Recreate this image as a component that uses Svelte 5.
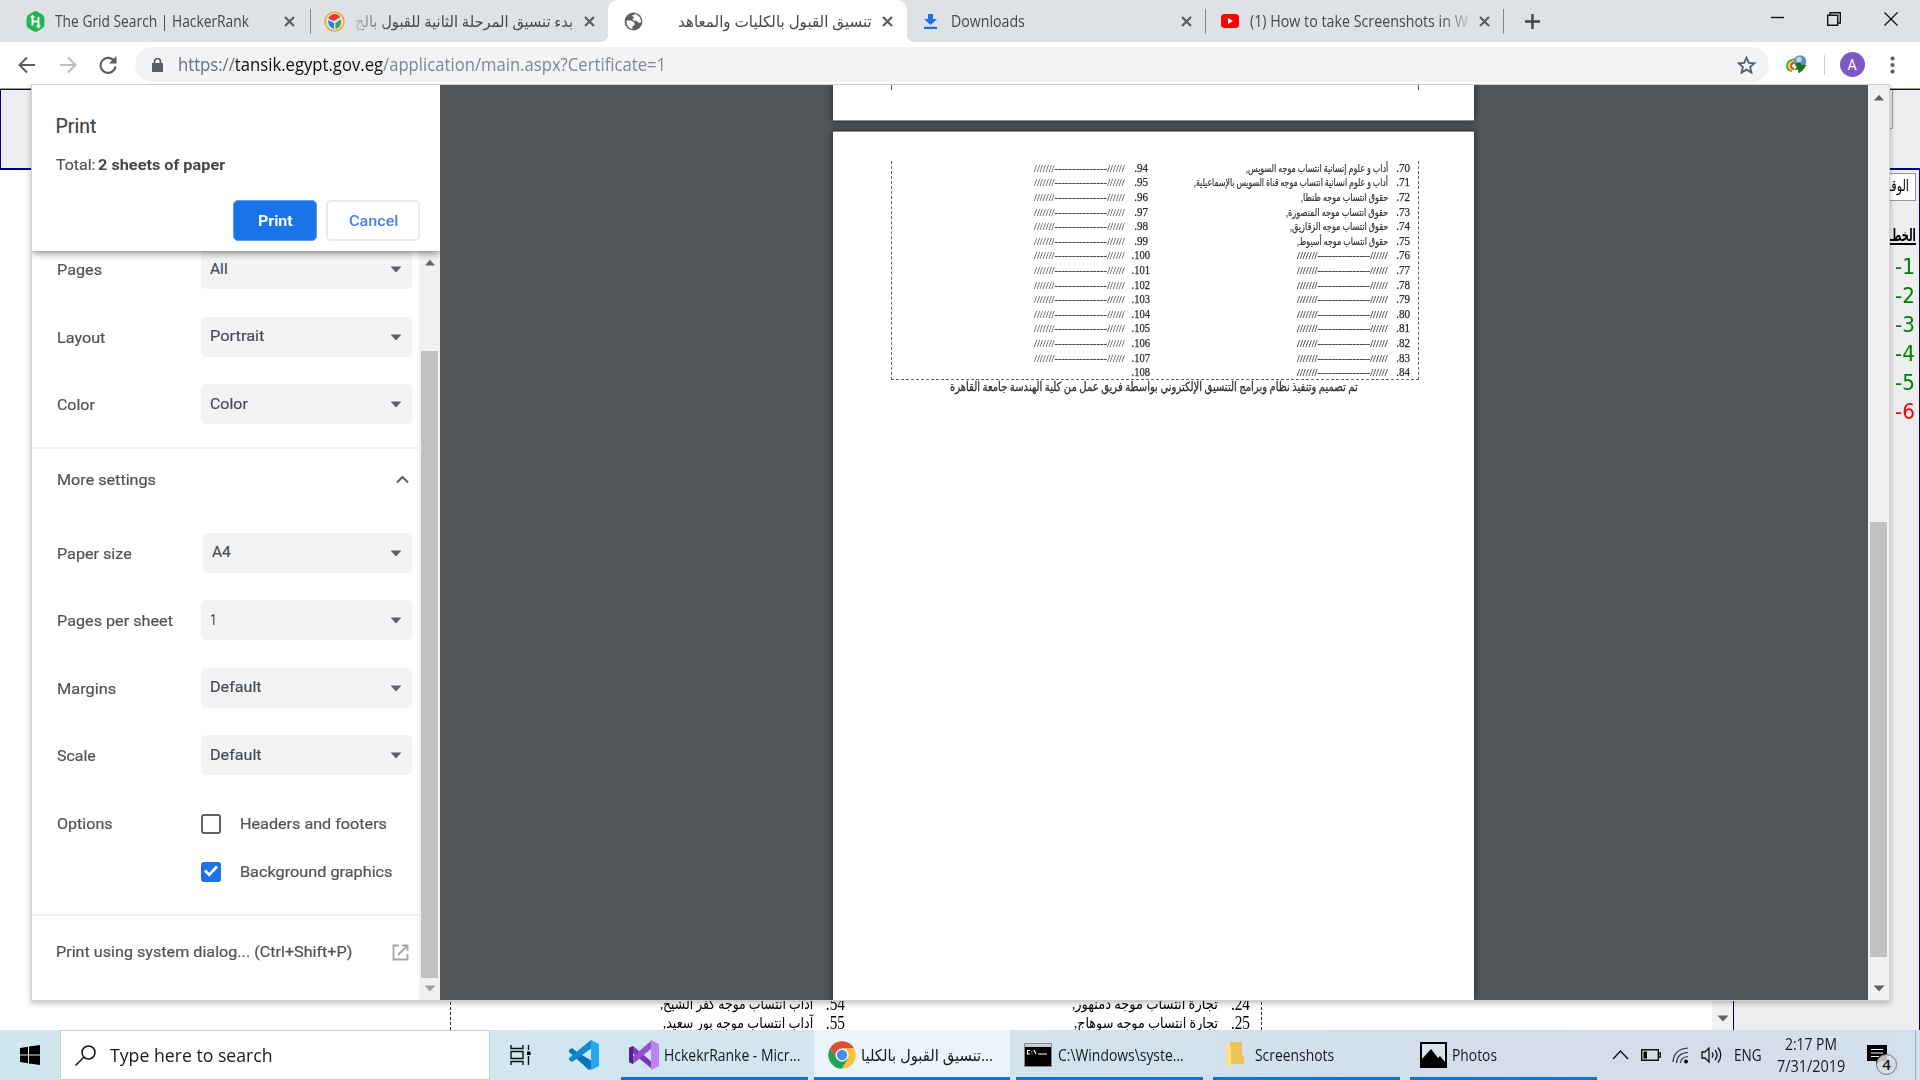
<script>
  // Scales a run of text horizontally so that it fills the given width.
  function squeeze(node, w) {
    const natural = node.offsetWidth;
    if (natural) node.style.transform = `scaleX(${w / natural})`;
  }

  const blank = '///////---------------//////';
  const first = [
    [70, 'أداب و علوم إنسانية انتساب موجه السويس,', 142],
    [71, 'أداب و علوم انسانية انتساب موجه قناة السويس بالإسماعيلية,', 194],
    [72, 'حقوق انتساب موجه طنطا,', 87],
    [73, 'حقوق انتساب موجه المنصورة,', 102],
    [74, 'حقوق انتساب موجه الزقازيق,', 98],
    [75, 'حقوق انتساب موجه أسيوط,', 91],
    ...Array.from({ length: 9 }, (_, i) => [76 + i, blank, 91])
  ];
  const second = Array.from({ length: 15 }, (_, i) => [94 + i, i < 14 ? blank : '', 91]);

  const basic = [
    ['Pages', 'All', 45, 18],
    ['Layout', 'Portrait', 48, 54],
    ['Color', 'Color', 38, 38]
  ];
  const more = [
    ['Paper size', 'A4', 75, 19],
    ['Pages per sheet', '1', 116, 7],
    ['Margins', 'Default', 59, 52],
    ['Scale', 'Default', 39, 52]
  ];
  const apps = [
    { icon: 'vs', text: 'HckekrRanke - Micr...', w: 136 },
    { icon: 'chrome', text: 'تنسيق القبول بالكليا...', w: 132 },
    { icon: 'cmd', text: 'C:\\Windows\\syste...', w: 126 },
    { icon: 'folder', text: 'Screenshots', w: 79 },
    { icon: 'photos', text: 'Photos', w: 45 }
  ];
</script>

{#snippet fit(text, w, rtl = false)}
  <span class="fit" style:width={w + 'px'}><span class="run" dir={rtl ? 'rtl' : 'ltr'} use:squeeze={w}>{text}</span></span>
{/snippet}

{#snippet cross()}
  <svg width="11" height="11" viewBox="0 0 11 11"><path d="M1 1l9 9M10 1l-9 9" stroke="#5a5e63" stroke-width="2.2" /></svg>
{/snippet}

{#snippet caret(cls, dir)}
  <svg class={cls} width="12" height="7" viewBox="0 0 12 7"><path d={dir === 'up' ? 'M1 6.5L6 .8l5 5.7z' : 'M.5.5h11L6 6.5z'} fill="currentColor" /></svg>
{/snippet}

{#snippet row(label, value, lw, vw)}
  <div class="row">
    <div class="label">{@render fit(label, lw)}</div>
    <div class="select" class:inset={label === 'Paper size'}>{@render fit(value, vw)}{@render caret('tri', 'down')}</div>
  </div>
{/snippet}

{#snippet list(items)}
  {#each items as [n, text, w]}
    <li><span class="num" class:wide={n > 99}>.{n}</span><span class="txt">{#if text}{@render fit(text, w, n < 76)}{/if}</span></li>
  {/each}
{/snippet}

<div class="screen">
  <header class="tabs">
    <div class="tab t1">
      <svg width="19" height="21" viewBox="0 0 19 21"><path d="M9.500 0q1.400 0 2.600.9l4.800 3q1.600 1 1.600 6.600t-1.600 6.600l-4.800 3q-2.600 1.600-5.200 0l-4.800-3Q.5 16 .5 10.500t1.600-6.600l4.800-3Q8.100 0 9.500 0z" fill="#22b455" /><path d="M6.500 5.500v9M12.500 6v9.500M6.500 10.500h6M4.800 6.500l1.700-1.500 1.700 1.500M10.800 14.500l1.700 1.500 1.700-1.500" stroke="#fff" stroke-width="1.900" fill="none" /></svg>
      <div class="title">{@render fit('The Grid Search | HackerRank', 194)}</div>
      {@render cross()}
    </div>
    <i class="sep"></i>
    <div class="tab t2">
      <svg width="21" height="21" viewBox="0 0 21 21"><circle cx="10.500" cy="10.500" r="9.500" fill="#dee1e6" stroke="#f6ac28" stroke-width="1.700" /><path d="M4.500 7.500Q6 3 11 3q4 0 5 3.500l-6.500 3.500z" fill="#e33a35" /><path d="M4 9l6 3v6Q4 16 4 9z" fill="#2585d5" /><path d="M17 8.500q1 8-5.500 9.500v-6z" fill="#35a35b" /></svg>
      <div class="title fade-l">{@render fit('بدء تنسيق المرحلة الثانية للقبول بالج', 218, true)}</div>
      {@render cross()}
    </div>
    <div class="tab t3">
      <svg width="19" height="19" viewBox="0 0 19 19"><circle cx="9.500" cy="9.500" r="8.900" fill="#5c6065" /><path d="M2.500 8.500l4.500 0 3.500 2v2.500l-2 1.500v2.700Q2 15.500 2.500 8.500zM8 3.500l4-1.500 4 3.500 1.300 4.500-2.300 1-2.500-2-3.500-.5-.5-2 2-.5z" fill="#fff" /></svg>
      <div class="title">{@render fit('تنسيق القبول بالكليات والمعاهد', 194, true)}</div>
      {@render cross()}
      <b class="foot left"></b><b class="foot right"></b>
    </div>
    <div class="tab t4">
      <svg width="13" height="15" viewBox="0 0 13 15"><path d="M4 0h5v5h4L6.500 11 0 5h4zM0 12.800h13V15H0z" fill="#1a73e8" /></svg>
      <div class="title">{@render fit('Downloads', 74)}</div>
      {@render cross()}
    </div>
    <i class="sep"></i>
    <div class="tab t5">
      <svg width="18" height="14" viewBox="0 0 18 14"><rect width="18" height="14" rx="3.500" fill="#f00" /><path d="M7 4l5 3-5 3z" fill="#fff" /></svg>
      <div class="title fade-r">{@render fit('(1) How to take Screenshots in W', 218)}</div>
      {@render cross()}
    </div>
    <i class="sep"></i>
    <svg class="plus" width="15" height="15" viewBox="0 0 15 15"><path d="M7.500 0v15M0 7.500h15" stroke="#41454a" stroke-width="2.400" /></svg>
    <div class="window">
      <svg width="13" height="14" viewBox="0 0 13 14"><path d="M0 5.500h13" stroke="#111" stroke-width="1.400" /></svg>
      <svg width="14" height="14" viewBox="0 0 14 14"><path d="M.7 3.200h10v10h-10zM3 3V.7h10.300v10.300H11" fill="none" stroke="#111" stroke-width="1.400" /></svg>
      <svg width="14" height="14" viewBox="0 0 14 14"><path d="M.5.5l13 13M13.500.5l-13 13" stroke="#111" stroke-width="1.300" /></svg>
    </div>
  </header>

  <nav class="toolbar">
    <svg class="nav" width="18" height="18" viewBox="0 0 18 18"><path d="M17 9H2M9 1.500L1.500 9 9 16.500" fill="none" stroke="#5a5e63" stroke-width="2" /></svg>
    <svg class="nav" width="18" height="18" viewBox="0 0 18 18"><path d="M1 9h15M9 1.500L16.500 9 9 16.500" fill="none" stroke="#bdbec0" stroke-width="2" /></svg>
    <svg class="nav" width="18" height="18" viewBox="0 0 18 18"><path d="M15.500 5.500A7.500 7.500 0 1 0 16.500 10.500" fill="none" stroke="#5a5e63" stroke-width="2.100" /><path d="M17.500 0v7.500H10z" fill="#5a5e63" /></svg>
    <div class="omnibox">
      <svg width="11" height="14" viewBox="0 0 11 14"><path d="M0 5h11v9H0z" fill="#5a5e63" /><path d="M2.500 6V3.500a3 3 0 0 1 6 0V6" fill="none" stroke="#5a5e63" stroke-width="1.600" /></svg>
      <div class="url"><span class="fit"><span class="run" use:squeeze={488}><span class="scheme">https://</span><span class="host">tansik.egypt.gov.eg</span>/application/main.aspx?Certificate=1</span></span></div>
      <svg width="19" height="18" viewBox="0 0 24 23"><path d="M12 2l2.900 6.700 7.200.6-5.500 4.800 1.700 7.100L12 17.400l-6.300 3.800 1.700-7.100L1.900 9.300l7.200-.6z" fill="none" stroke="#5a5e63" stroke-width="2.300" /></svg>
    </div>
    <svg class="idm" width="21" height="19" viewBox="0 0 21 19"><path d="M10 4Q1 5 1 11q0 4 5 5" fill="none" stroke="#49a83c" stroke-width="2" /><path d="M10 5.500Q3 7 3 11q0 3 4 4" fill="none" stroke="#f1d22e" stroke-width="2" /><path d="M10 7Q5 8 5 11q0 2 3 3" fill="none" stroke="#dc4932" stroke-width="2" /><circle cx="14" cy="6.500" r="6.300" fill="#5c8fc8" /><circle cx="13" cy="4.500" r="2.800" fill="#b9d8f0" /><path d="M9 8.500l5-1 2 2.500h4.500l-3.500 5-4.500 3.500-.5-4-4 .5 3-3z" fill="#177915" /></svg>
    <i class="bar"></i>
    <div class="avatar">A</div>
    <svg width="5" height="18" viewBox="0 0 5 18"><g fill="#5a5e63"><circle cx="2.500" cy="2.500" r="2.100" /><circle cx="2.500" cy="9" r="2.100" /><circle cx="2.500" cy="15.500" r="2.100" /></g></svg>
  </nav>

  <main class="site">
    <div class="banner"><div class="field"></div></div>
    <div class="columns">
      <div class="results">
        <div class="listing">
          <div class="entry e2"><p>{@render fit('آداب انتساب موجه كفر الشيخ,', 153, true)}<span>.54</span></p><p>{@render fit('آداب انتساب موجه بور سعيد,', 150, true)}<span>.55</span></p></div>
          <div class="entry e1"><p>{@render fit('تجارة انتساب موجه دمنهور,', 146, true)}<span>.24</span></p><p>{@render fit('تجارة انتساب موجه سوهاج,', 144, true)}<span>.25</span></p></div>
        </div>
        <div class="vscroll">{@render caret('tri', 'down')}</div>
      </div>
      <aside>
        <div class="clock"><span>{@render fit('الوقـ', 21, true)}</span></div>
        <div class="steps-title"><span class="line">{@render fit('الخطـ', 27, true)}</span></div>
        {#each [1, 2, 3, 4, 5, 6] as n}<div class="step" class:red={n === 6}>{@render fit('-' + n, 20)}</div>{/each}
      </aside>
    </div>

    <section class="dialog">
      <div class="settings">
        <div class="head">
          <h1>{@render fit('Print', 41)}</h1>
          <p>{@render fit('Total:', 39)} <strong>{@render fit('2 sheets of paper', 127)}</strong></p>
          <div class="buttons"><button class="primary">{@render fit('Print', 35)}</button><button>{@render fit('Cancel', 49)}</button></div>
        </div>
        <div class="body">
          <div class="options">
            <div class="basic">{#each basic as [a, b, c, d]}{@render row(a, b, c, d)}{/each}</div>
            <div class="more">{@render fit('More settings', 99)}<svg width="13" height="9" viewBox="0 0 13 9"><path d="M1 7.500l5.500-5.500L12 7.500" fill="none" stroke="#5a5e63" stroke-width="2" /></svg></div>
            <div class="extra">{#each more as [a, b, c, d]}{@render row(a, b, c, d)}{/each}</div>
            <div class="checks">
              <div class="label">{@render fit('Options', 56)}</div>
              <div>
                <div class="check"><i class="box"></i>{@render fit('Headers and footers', 147)}</div>
                <div class="check"><i class="box on"><svg width="16" height="14" viewBox="0 0 16 14"><path d="M2 6.500l4.200 4.300L14 2.500" fill="none" stroke="#fff" stroke-width="2.700" /></svg></i>{@render fit('Background graphics', 152)}</div>
              </div>
            </div>
            <div class="system">{@render fit('Print using system dialog... (Ctrl+Shift+P)', 296)}<svg width="17" height="17" viewBox="0 0 17 17"><path d="M7 1.500H1.500v14h14V10M10 1.500h5.500V7M15 2L6 11" fill="none" stroke="#a5a8ab" stroke-width="1.800" /></svg></div>
          </div>
          <div class="rail">{@render caret('tri', 'up')}<i></i>{@render caret('tri dim', 'down')}</div>
        </div>
      </div>
      <div class="preview">
        <div class="sheets">
          <div class="sheet top"><div class="ticks"></div></div>
          <div class="sheet">
            <div class="frame"><ol class="c1">{@render list(second)}</ol><ol class="c2">{@render list(first)}</ol></div>
            <div class="credit">{@render fit('تم تصميم وتنفيذ نظام وبرامج التنسيق الإلكتروني بواسطة فريق عمل من كلية الهندسة جامعة القاهرة', 408, true)}</div>
          </div>
        </div>
        <div class="prail">{@render caret('tri', 'up')}<i></i>{@render caret('tri', 'down')}</div>
      </div>
    </section>
  </main>

  <footer class="taskbar">
    <div class="start"><svg width="20" height="20" viewBox="0 0 20 20"><path d="M0 3l8-1.200v7.700H0zM9 1.600L20 0v9.500H9zM0 10.500h8v7.700L0 17zM9 10.500h11V20L9 18.400z" /></svg></div>
    <div class="search"><svg width="21" height="21" viewBox="0 0 21 21"><circle cx="13.500" cy="7.500" r="6.500" fill="none" stroke="#111" stroke-width="1.500" /><path d="M9 12L.5 20.500" stroke="#111" stroke-width="1.500" /></svg>{@render fit('Type here to search', 163)}</div>
    <svg class="view" width="21" height="20" viewBox="0 0 21 20"><path d="M1 0v3.500h12V0M1 20v-3.500h12V20M1 6.500h12v7H1zM18.500 0v5M18.500 11v9" fill="none" stroke="#111" stroke-width="1.400" /><path d="M17 6.500h3.500V10H17z" /></svg>
    <svg class="code" width="31" height="30" viewBox="0 0 31 30"><path d="M22 0L8 12 3 8 0 10v2l20 18 3-2V21L8 12z" fill="#0877b9" /><path d="M23 8L3 22l-3-2v-2L22 0z" fill="#1688d1" /><path d="M22 0l8 4v22l-8 4z" fill="#2aa6ee" /></svg>
    {#each apps as app}
      <div class="app {app.icon}">
        <div class="icon">
          {#if app.icon === 'vs'}
            <svg width="31" height="30" viewBox="0 0 31 30"><path d="M0 8l4-2 19 16v7L0 10z" fill="#7b37b8" /><path d="M0 22l4 2L23 8V0L0 20z" fill="#9450d0" /><path d="M0 8l4-2v18l-4-2z" fill="#52218b" /><path d="M22 0l8 4v22l-8 4z" fill="#bd83f4" /></svg>
          {:else if app.icon === 'chrome'}
            <svg width="28" height="28" viewBox="0 0 28 28"><circle cx="14" cy="14" r="13.700" fill="#fbc13d" /><path d="M2.200 7A13.700 13.700 0 0 1 25.900 7H14l-6.200 10.500z" fill="#dc4d40" /><path d="M2.200 7A13.700 13.700 0 0 0 13.500 27.700L20 17.500 14 21l-6-3.500z" fill="#1da362" /><circle cx="14" cy="14" r="6.500" fill="#fff" /><circle cx="14" cy="14" r="5.200" fill="#4a8af4" /></svg>
          {:else if app.icon === 'cmd'}
            <svg width="28" height="24" viewBox="0 0 28 24"><rect width="28" height="24" rx="1" fill="#888" /><rect x="1" y="1" width="26" height="3" fill="#ccc" /><rect x="1" y="4" width="26" height="19" /><path d="M6 7.500H3.500v3.500H6M8 8v.8M8 10.500v.8M10 7l2 4M14 11h9" fill="none" stroke="#fff" stroke-width="1.200" /></svg>
          {:else if app.icon === 'folder'}
            <svg width="18" height="26" viewBox="0 0 18 26"><path d="M4 0h12v13l2 2v7H4z" fill="#edc457" /><path d="M0 1l5 3v22l-5-4z" fill="#ffe08b" /></svg>
          {:else}
            <svg width="27" height="26" viewBox="0 0 27 26"><path d="M0 0h27v26H0z" /><path d="M2 2h23v18l-5-6-2 2-7-9-9 10z" fill="#dbe4ee" /></svg>
          {/if}
        </div>
        {@render fit(app.text, app.w)}
      </div>
    {/each}
    <div class="tray">
      <svg width="17" height="10" viewBox="0 0 17 10"><path d="M1 9l7.500-8L16 9" fill="none" stroke="#111" stroke-width="1.400" /></svg>
      <svg width="20" height="12" viewBox="0 0 20 12"><path d="M.7.700h16.600v10.600H.7zM18 4h1.300v4H18" fill="none" stroke="#111" stroke-width="1.400" /><path d="M2.500 2.500h3.500v7H2.500z" /></svg>
      <svg width="17" height="17" viewBox="0 0 17 17"><path d="M1 15Q2 2 16 1M4.500 16Q5 6 16 5.500M8.500 16Q9 10 16 9.500" fill="none" stroke="#333" stroke-width="1.200" /><circle cx="14" cy="14.500" r="1.900" /></svg>
      <svg width="21" height="18" viewBox="0 0 21 18"><path d="M1 6h3l4-4v14l-4-4H1zM11 6.500q2 2.500 0 5M14 4q4 5 0 10M17 1.500q5.500 7.500 0 15" fill="none" stroke="#111" stroke-width="1.300" /></svg>
      <div class="lang">{@render fit('ENG', 28)}</div>
      <div class="time">{@render fit('2:17 PM', 52)}{@render fit('7/31/2019', 68)}</div>
      <div class="notes"><svg width="20" height="20" viewBox="0 0 20 20"><path d="M0 0h20v16h-7l-4 4v-4H0z" /><path d="M4 4.500h12M4 8h12M4 11.500h8" stroke="#fff" stroke-width="1.200" /></svg><b>4</b></div>
      <i class="peek"></i>
    </div>
  </footer>
</div>

<style>
  :global(body) { background: #fff; overflow: hidden; }
  * { box-sizing: border-box; }
  svg { display: block; flex: none; }
  .screen { width: 1920px; height: 1080px; display: grid; grid-template-rows: 42px 42px 946px 50px; font-family: 'Open Sans', 'Noto Sans', 'DejaVu Sans', sans-serif; overflow: hidden; }
  .fit { display: inline-block; white-space: nowrap; flex: none; text-align: left; direction: ltr; }
  .run { display: inline-block; transform-origin: left center; }

  .tabs { display: flex; align-items: center; background: #dee1e6; font-size: 15.5px; color: #45484c; line-height: 24px; }
  .tab { height: 42px; display: flex; align-items: center; flex: none; padding-right: 15px; }
  .title { flex: 1; display: flex; min-width: 0; }
  .tab:not(.t2, .t3) .title { padding-bottom: 1px; }
  .t1 { width: 310px; padding-left: 26px; gap: 10px; }
  .t2 { width: 297px; padding-left: 13px; padding-right: 13px; gap: 9px; }
  .t2 .title, .t3 .title { justify-content: flex-end; padding-right: 2px; }
  .t3 { width: 299px; padding-left: 16px; padding-right: 14px; gap: 8px; background: #fff; border-radius: 10px 10px 0 0; position: relative; }
  .t4 { width: 298px; padding-left: 17px; padding-right: 13px; gap: 14px; }
  .t5 { width: 297px; padding-left: 15px; padding-right: 13px; gap: 11px; }
  .sep { width: 1px; height: 25px; background: #868a8f; flex: none; }
  .fade-l { mask-image: linear-gradient(90deg, #0003, #000 36px); }
  .fade-r { mask-image: linear-gradient(90deg, #000 190px, #0003 218px); }
  .foot { position: absolute; bottom: 0; width: 8px; height: 8px; }
  .left { left: -8px; background: radial-gradient(circle at 0 0, #dee1e6 8px, #fff 8.5px); }
  .right { right: -8px; background: radial-gradient(circle at 100% 0, #dee1e6 8px, #fff 8.5px); }
  .plus { margin-left: 21px; }
  .window { margin-left: auto; display: flex; gap: 43px; padding: 0 22.500px 5px 0; }

  .toolbar { display: flex; align-items: center; padding: 3px 26px 0 18px; background: #fff; }
  .nav { margin-right: 22.500px; }
  .omnibox { width: 1634px; height: 35px; margin-left: -5px; border-radius: 18px; background: #f1f3f4; display: flex; align-items: center; padding: 0 13px 0 17px; flex: none; }
  .url { flex: 1; font-size: 18px; line-height: 26px; height: 28px; margin-left: 15px; color: #83878b; }
  .scheme { color: #6b6f73; } .host { color: #111; }
  .idm { margin-left: 17px; }
  .bar { width: 1px; height: 20px; background: #ccc; margin: 0 15px 0 17px; }
  .avatar { width: 25px; height: 25px; border-radius: 50%; background: #7e57c2; color: #fff; display: grid; place-items: center; font: 14px Roboto, sans-serif; margin-right: 25px; flex: none; }

  .site { position: relative; overflow: hidden; display: flex; flex-direction: column; padding-top: 4px; background: linear-gradient(#fff 4px, #999 4px, #999 5px, #fff 5px); }
  .banner { height: 81px; flex: none; border: 1px solid #000080; border-bottom-width: 2px; background: #eee; margin-top: 1px; display: flex; justify-content: flex-end; }
  .field { width: 200px; height: 39px; border: 1px solid #999; border-top: 0; margin-right: 27px; }
  .columns { display: flex; flex: 1; }
  .results { width: 1733px; display: flex; justify-content: flex-end; }
  .listing { width: 812px; border: 1px dashed #222; border-width: 0 1px; margin-right: 450px; display: flex; align-items: flex-end; font: 16px/19px 'Liberation Serif', 'DejaVu Sans', serif; }
  .entry p { display: flex; justify-content: flex-end; margin: 0; height: 19px; align-items: center; }
  .entry span:last-child:not(.fit, .run) { width: 32px; text-align: right; font-size: 18px; transform: scaleX(.85); transform-origin: right; }
  .entry .fit { font-size: 15px; }
  .e2 { width: 394px; margin-bottom: -3px; } .e1 { width: 405px; margin-bottom: -3px; }
  .vscroll { width: 21px; background: #f1f1f1; display: flex; align-items: flex-end; justify-content: center; padding-bottom: 8px; color: #505050; }
  aside { width: 187px; border: solid #000080; border-width: 0 1px 0 1px; background: #eee; display: flex; flex-direction: column; align-items: flex-end; padding: 3px 3px 0 0; }
  .clock { width: 150px; height: 28px; border: 1px solid #999; background: #fff; display: flex; justify-content: flex-end; padding-right: 6px; font: 16px/23px 'Liberation Serif', 'DejaVu Sans', serif; }
  .steps-title { height: 52px; padding-top: 24px; font: bold 17px/22px 'Liberation Serif', 'DejaVu Sans', serif; }
  .line { display: block; height: 20px; border-bottom: 2px solid #000; }
  .step { height: 29px; padding-right: 1px; font: 21px/29px 'DejaVu Sans', sans-serif; color: #008000; }
  .step.red { color: #f00; }

  .dialog { position: absolute; left: 31px; top: 0; width: 1859px; height: 917px; border: 1px solid #d0d0d0; display: flex; background: #525659; box-shadow: 0 2px 6px #0004; }
  .settings { width: 408px; display: flex; flex-direction: column; background: #fff; font-family: Roboto, sans-serif; color: #505357; font-size: 15.500px; -webkit-text-stroke: .2px #505357; }
  .head { height: 166px; flex: none; padding: 28px 20px 0 23.500px; box-shadow: 0 1px 8px #0009; clip-path: inset(0 0 -9px 0); background: #fff; position: relative; }
  h1 { margin: 0; font-weight: 400; font-size: 19.500px; line-height: 27px; color: #3b3e42; }
  .head p { margin: 13px 0 0; line-height: 24px; height: 24px; white-space: nowrap; }
  strong { font-weight: 700; color: #44474b; -webkit-text-stroke: 0; }
  .buttons { display: flex; justify-content: flex-end; gap: 9px; margin-top: 23px; }
  button { width: 94px; height: 41px; border: 2px solid #e8eaed; border-radius: 5px; background: #fff; color: #4a82ea; font: 500 15.500px Roboto, sans-serif; padding: 0; -webkit-text-stroke: 0; }
  .primary { width: 84px; background: #1a73e8; color: #fff; border: 1px solid #5b9af0; font-weight: 700; }
  .body { display: flex; flex: 1; min-height: 0; }
  .options { width: 387px; overflow: hidden; }
  .row { display: flex; align-items: center; height: 67.500px; padding-left: 24.500px; }
  .label { width: 144px; padding-top: 2px; }
  .select { width: 211px; height: 40px; background: #f1f3f4; border-radius: 5px; display: flex; align-items: center; justify-content: space-between; padding: 0 10px 1px 9.500px; color: #484b4f; }
  .select .tri { position: relative; top: 1px; }
  .select.inset { width: 209px; margin-left: 2px; }
  .tri { color: #5f6368; }
  .basic { margin-top: -15.500px; height: 213.500px; border-bottom: 2px solid #f1f1f1; }
  .more { height: 61px; display: flex; align-items: center; justify-content: space-between; padding: 0 10px 0 24.500px; }
  .extra { height: 281px; padding-top: 9px; }
  .checks { display: flex; padding: 16px 0 0 24.500px; height: 125px; border-bottom: 2px solid #f1f1f1; }
  .checks .label { padding: 8px 0 0; }
  .check { display: flex; align-items: center; gap: 19px; }
  .check:first-child { height: 34px; } .check:last-child { height: 61px; }
  .box { width: 20px; height: 20px; border: 2.500px solid #5f6368; border-radius: 3px; flex: none; }
  .on { background: #1a73e8; border: 2px solid #1a73e8; }
  .system { height: 72px; display: flex; align-items: center; justify-content: space-between; padding: 0 10px 0 23.500px; }
  .rail { width: 21px; background: #f1f1f1; display: flex; flex-direction: column; align-items: center; padding: 8px 0 8px; }
  .rail i { width: 17px; height: 627px; background: #c1c1c1; margin-top: auto; margin-bottom: 7px; }
  .dim { color: #a0a0a0; }
  .preview { flex: 1; display: flex; justify-content: space-between; min-width: 0; }
  .sheets { margin-left: 393px; width: 641px; display: flex; flex-direction: column; gap: 10px; overflow: visible; clip-path: inset(0 -12px); }
  .sheet { background: #fff; flex: 1; box-shadow: 0 0 7px #0009; border-top: 1px solid #8b8d8f; font-family: 'Liberation Serif', 'DejaVu Sans', serif; color: #333; padding: 29px 0 0 58px; }
  .top { flex: none; height: 36px; border-top: 0; border-bottom: 1px solid #8b8d8f; padding-top: 0; }
  .ticks { height: 5px; width: 528px; border: 1px dashed #555; border-width: 0 1px; }
  .frame { width: 528px; height: 219px; border: 1px dashed #666; border-top: 0; display: flex; }
  ol { margin: -.5px 0 0; padding: 0; list-style: none; flex: none; font-size: 12px; }
  .c1 { width: 258px; } .c2 { width: 260px; }
  li { display: flex; flex-direction: row-reverse; height: 14.600px; align-items: center; line-height: 14px; }
  .num { width: 22px; text-align: right; color: #222; -webkit-text-stroke: .25px #333; transform: scaleX(.92); transform-origin: right; }
  .c1 .num:not(.wide) { position: relative; left: -2.500px; }
  .wide { transform: scaleX(.88); }
  .txt { font-size: 11px; display: flex; }
  .c1 .txt { margin-right: 3px; }
  .c2 .txt .fit { -webkit-text-stroke: .2px #333; }
  .c1 .txt .fit { -webkit-text-stroke: .1px #333; }
  .credit { padding-left: 59px; font-size: 12.500px; line-height: 14px; -webkit-text-stroke: .3px #333; }
  .prail { width: 21px; background: #f1f1f1; display: flex; flex-direction: column; align-items: center; padding: 9px 0 8px; }
  .prail i { width: 17px; height: 435px; background: #c1c1c1; margin: auto 0 28px; }

  .taskbar { display: flex; background: linear-gradient(90deg, #d0e6ee 0, #d1e6ef 800px, #d3dfec 1350px, #d5dcea 1650px, #d4e0ee); font-size: 16px; line-height: 24px; color: #171a1c; }
  .start { width: 60px; display: grid; place-items: center; flex: none; }
  .search { width: 430px; border: 1px solid #ccc; background: #fff; display: flex; align-items: center; padding-left: 14px; gap: 14px; font-size: 18px; flex: none; }
  .view { margin: 15px 0 0 20px; } .code { margin: 10px 0 0 38px; }
  .app { width: 187px; height: 50px; border-bottom: 3px solid #0078d7; padding-top: 3px; display: flex; align-items: center; flex: none; }
  .vs { margin-left: 21px; } .chrome { width: 196px; margin-left: 6px; background: #ebf4f8; } .cmd { margin-left: 6px; }
  .icon { width: 43px; padding-left: 8px; flex: none; }
  .chrome .icon { width: 47px; padding-left: 14px; }
  .cmd .icon { width: 42px; } .folder .icon { width: 42px; padding-left: 13px; } .photos .icon { width: 42px; padding-left: 10px; }
  .folder { margin-left: 10px; } .photos { margin-left: 10px; }
  .tray { flex: 1; display: flex; align-items: center; padding-left: 15px; gap: 11.500px; }
  .lang { margin-left: 1px; }
  .time { display: flex; flex-direction: column; align-items: center; line-height: 22px; margin: -1px 0 0 3px; width: 68px; font-size: 15.500px; flex: none; }
  .notes { position: relative; margin-left: 11px; }
  .notes b { position: absolute; left: 9px; top: 9px; width: 21px; height: 21px; border: 1px solid #777; border-radius: 50%; background: #d8dbdfdd; font-size: 15px; line-height: 19px; text-align: center; font-weight: 600; }
  .peek { width: 1px; height: 50px; background: #a5afbc; margin: 0 5px 0 auto; }
</style>
